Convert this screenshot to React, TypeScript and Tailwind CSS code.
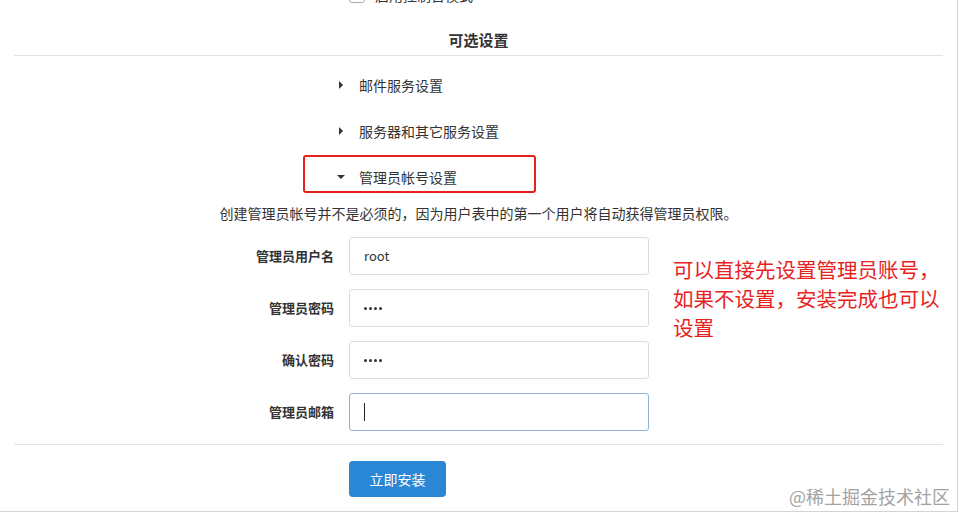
import React from 'react'

const FONT = { fontFamily: '"Microsoft YaHei", "Noto Sans CJK SC", "Noto Sans", sans-serif' }

const SECTIONS = [
  { title: '邮件服务设置', open: false },
  { title: '服务器和其它服务设置', open: false },
  { title: '管理员帐号设置', open: true },
]

const FIELDS = [
  { label: '管理员用户名', value: 'root', secret: false, focus: false },
  { label: '管理员密码', value: '', secret: true, focus: false },
  { label: '确认密码', value: '', secret: true, focus: false },
  { label: '管理员邮箱', value: '', secret: false, focus: true },
]

function Caret({ open }: { open: boolean }) {
  return (
    <svg width="8" height="8" viewBox="0 0 8 8" className="shrink-0">
      {open ? <path d="M0 2 L8 2 L4 6 Z" fill="#333" /> : <path d="M2 0 L6 4 L2 8 Z" fill="#333" />}
    </svg>
  )
}

function Dots() {
  return (
    <span className="flex items-center gap-[2px]">
      {[0, 1, 2, 3].map((i) => (
        <span key={i} className="w-[3px] h-[3px] rounded-full bg-[#333]" />
      ))}
    </span>
  )
}

export default function App() {
  return (
    <div className="relative w-[972px] h-[525px] bg-white overflow-hidden text-[#333]" style={FONT}>
      <div className="flow-root w-[958px] h-[512px] border-r border-b border-[#d4d4d4] px-[14px]">
        {/* cut-off checkbox row */}
        <div className="flex items-center gap-[10px] pl-[335px] -mt-[13px] h-[16px]">
          <span className="w-[16px] h-[16px] rounded-[3px] border border-[#aaa] bg-white" />
          <span className="text-[14px] leading-none">启用控制台模式</span>
        </div>

        <div className="border-b border-[#e2e2e2] pt-[27px] pb-[5px] text-center text-[15px] font-bold leading-[20px]">
          可选设置
        </div>

        <div className="pt-[19px]">
          {SECTIONS.map((s) => (
            <div key={s.title} className="flex items-center h-[20px] mb-[26px] pl-[323px] gap-[14px] text-[14px]">
              <Caret open={s.open} />
              <span>{s.title}</span>
            </div>
          ))}
        </div>

        <p className="-mt-[10px] text-center text-[14px] leading-[20px]">
          创建管理员帐号并不是必须的，因为用户表中的第一个用户将自动获得管理员权限。
        </p>

        <div className="mt-[14px] flex flex-col gap-[14px]">
          {FIELDS.map((f) => (
            <div key={f.label} className="flex items-center gap-[15px]">
              <label className="w-[320px] text-right text-[13px] font-bold">{f.label}</label>
              <div
                className={`w-[300px] h-[38px] rounded-[3px] border bg-white flex items-center px-[14px] text-[13px] ${
                  f.focus ? 'border-[#8fb3d6]' : 'border-[#dcdcdc]'
                }`}
              >
                {f.focus ? (
                  <span className="w-px h-[18px] bg-[#222]" />
                ) : f.secret ? (
                  <Dots />
                ) : (
                  <span>{f.value}</span>
                )}
              </div>
            </div>
          ))}
        </div>

        <div className="mt-[13px] border-t border-[#e2e2e2] pt-[16px] pl-[335px]">
          <button className="w-[97px] h-[36px] rounded-[4px] bg-[#2a87d6] text-white text-[14px]">立即安装</button>
        </div>
      </div>

      {/* red annotation frame */}
      <div className="absolute left-[303px] top-[155px] w-[233px] h-[38px] border-2 border-[#e5221d] rounded-[3px]" />

      <div className="absolute left-[673px] top-[255px] w-[285px] text-[20.5px] leading-[29px] text-[#e8231f]">
        可以直接先设置管理员账号，
        <br />
        如果不设置，安装完成也可以
        <br />
        设置
      </div>

      <div className="absolute left-[789px] top-[485px] text-[18px] leading-[22px] text-[#a3a3a3] whitespace-nowrap">
        @稀土掘金技术社区
      </div>
    </div>
  )
}
